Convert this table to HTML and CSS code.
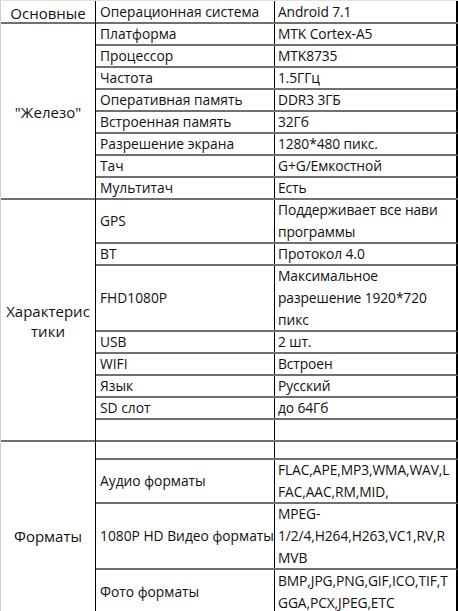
FILE: index.html
```html
<!DOCTYPE html>
<html lang="ru">
<head>
<meta charset="utf-8">
<link rel="stylesheet" href="styles.css">
</head>
<body>
<div class="sheet">
  <div class="section">
    <div class="label">Основные</div>
    <div class="rows">
      <div class="row h1"><div class="key">Операционная система</div><div class="val">Android 7.1</div></div>
    </div>
  </div>
  <div class="section">
    <div class="label">"Железо"</div>
    <div class="rows">
      <div class="row h1"><div class="key">Платформа</div><div class="val">MTK Cortex-A5</div></div>
      <div class="row h1"><div class="key">Процессор</div><div class="val">MTK8735</div></div>
      <div class="row h1"><div class="key">Частота</div><div class="val">1.5ГГц</div></div>
      <div class="row h1"><div class="key">Оперативная память</div><div class="val">DDR3 3ГБ</div></div>
      <div class="row h1"><div class="key">Встроенная память</div><div class="val">32Гб</div></div>
      <div class="row h1"><div class="key">Разрешение экрана</div><div class="val">1280*480 пикс.</div></div>
      <div class="row h1"><div class="key">Тач</div><div class="val">G+G/Емкостной</div></div>
      <div class="row h1"><div class="key">Мультитач</div><div class="val">Есть</div></div>
    </div>
  </div>
  <div class="section">
    <div class="label">Характерис<br>тики</div>
    <div class="rows">
      <div class="row h2"><div class="key">GPS</div><div class="val">Поддерживает все нави<br>программы</div></div>
      <div class="row h1"><div class="key">BT</div><div class="val">Протокол 4.0</div></div>
      <div class="row h3"><div class="key">FHD1080P</div><div class="val">Максимальное<br>разрешение 1920*720<br>пикс</div></div>
      <div class="row h1"><div class="key">USB</div><div class="val">2 шт.</div></div>
      <div class="row h1"><div class="key">WIFI</div><div class="val">Встроен</div></div>
      <div class="row h1"><div class="key">Язык</div><div class="val">Русский</div></div>
      <div class="row h1"><div class="key">SD слот</div><div class="val">до 64Гб</div></div>
      <div class="row h1"><div class="key"></div><div class="val"></div></div>
    </div>
  </div>
  <div class="section last">
    <div class="label low">Форматы</div>
    <div class="rows">
      <div class="row h0"><div class="key"></div><div class="val"></div></div>
      <div class="row h2"><div class="key">Аудио форматы</div><div class="val">FLAC,APE,MP3,WMA,WAV,L<br>FAC,AAC,RM,MID,</div></div>
      <div class="row h3"><div class="key">1080P HD Видео форматы</div><div class="val">MPEG-<br>1/2/4,H264,H263,VC1,RV,R<br>MVB</div></div>
      <div class="row h2 open"><div class="key">Фото форматы</div><div class="val">BMP,JPG,PNG,GIF,ICO,TIF,T<br>GGA,PCX,JPEG,ETC</div></div>
    </div>
  </div>
</div>
</body>
</html>
```

FILE: styles.css
```css
html, body {
  margin: 0;
  padding: 0;
  background: #fff;
}
body {
  font-family: "Open Sans", "Noto Sans", sans-serif;
  color: #111;
  width: 458px;
  height: 611px;
  overflow: hidden;
}
.sheet {
  display: flex;
  flex-direction: column;
  width: 458px;
  box-sizing: border-box;
  border-left: 1px solid #d0d0d0;
  border-top: 1px solid #e2e2e2;
}
.section {
  display: grid;
  grid-template-columns: 95px 1fr;
  border-bottom: 2px solid #707070;
}
.section.last {
  border-bottom: none;
}
.label {
  display: flex;
  align-items: center;
  justify-content: center;
  text-align: center;
  font-size: 15px;
  line-height: 20px;
  border-right: 1px solid #000;
  margin-bottom: -2px;
}
.label.low {
  padding-top: 8px;
}
.rows {
  display: flex;
  flex-direction: column;
}
.row {
  display: grid;
  grid-template-columns: 179px 179px;
  box-sizing: border-box;
  border-bottom: 2px solid #707070;
  border-right: 2px solid #000;
}
.section .row:last-child {
  border-bottom: none;
}
.row.h0 { height: 18px; }
.row.h1 { height: 22px; }
.row.h2 { height: 44px; }
.row.h3 { height: 66px; }
.section .row.h1:last-child { height: 20px; }
.section:first-child .row.h1:last-child { height: 21px; }
.row.open { height: 50px; padding-bottom: 6px; }
.key, .val {
  display: flex;
  align-items: center;
  font-size: 13.8px;
  line-height: 22px;
  white-space: nowrap;
  overflow: hidden;
}
.key {
  padding-left: 4px;
  border-right: 1px solid #000;
}
.val {
  padding-left: 3px;
  letter-spacing: -0.1px;
}
```
